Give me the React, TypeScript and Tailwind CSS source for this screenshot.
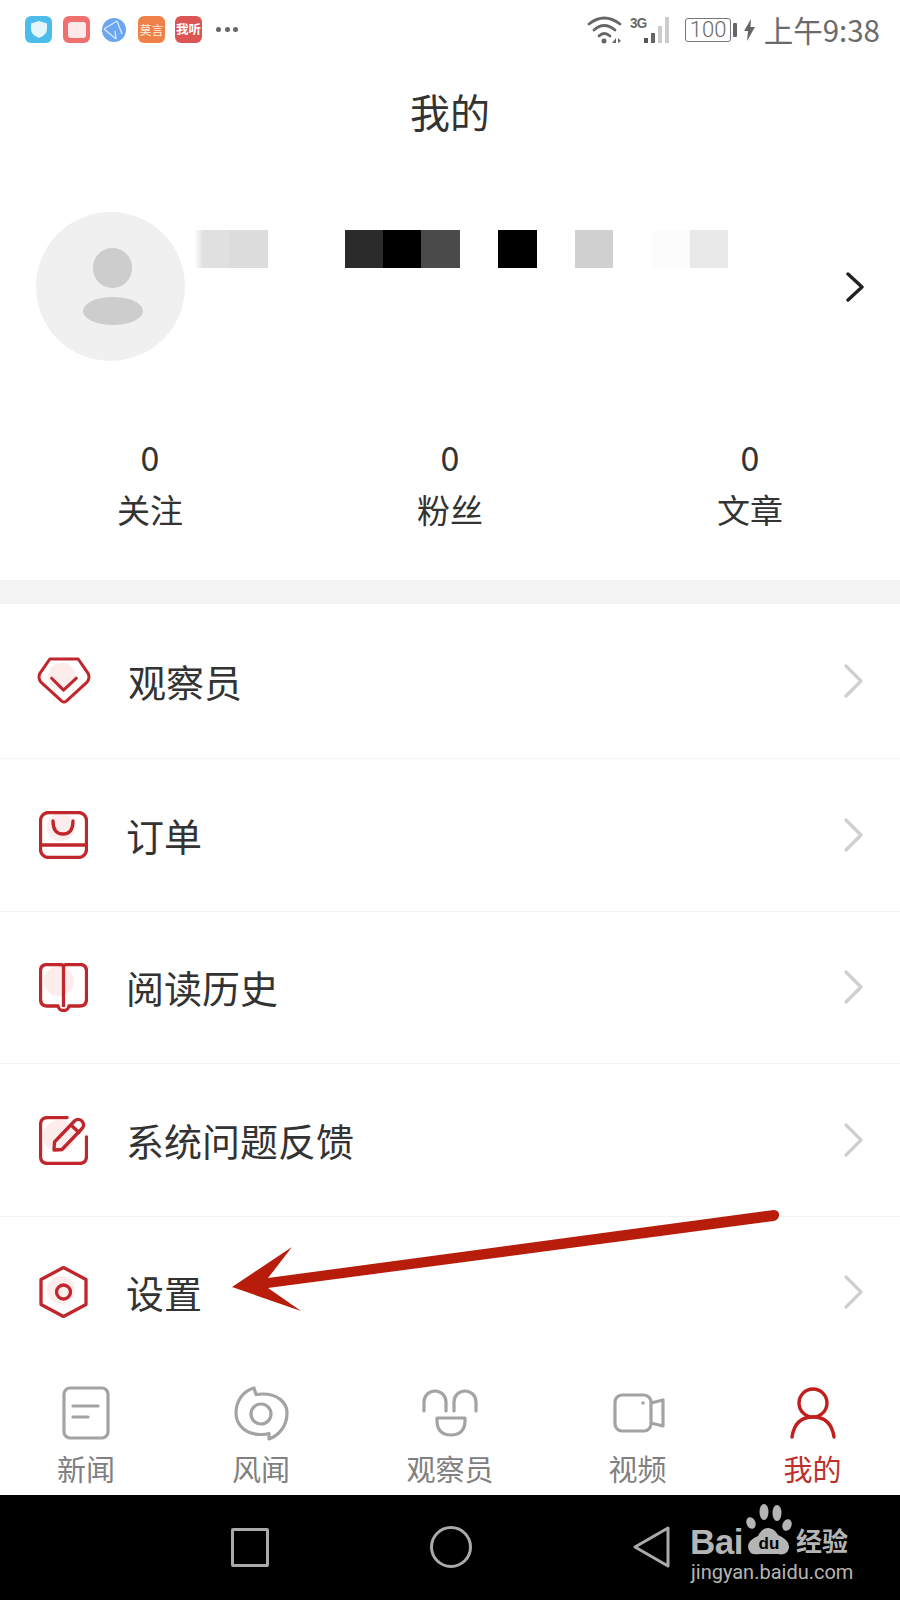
import React from "react";

const CJK = { fontFamily: '"Noto Sans CJK SC", "Noto Sans", sans-serif' };

function Chevron() {
  return (
    <svg width="20" height="34" viewBox="0 0 20 34" fill="none" stroke="#cfcfcf" strokeWidth="3.2" strokeLinecap="round" strokeLinejoin="round">
      <path d="M2 2 L17 17 L2 32" />
    </svg>
  );
}

const RED = "#c0262b";
const PINK = "#fcecec";

function Diamond() {
  return (
    <svg className="ml-[1px]" width="59" height="51" viewBox="-1 -1 59 51" fill="none" stroke={RED} strokeWidth="3.300" strokeLinejoin="round" strokeLinecap="round">
      <circle cx="26" cy="20" r="15" fill={PINK} stroke="none" />
      <path d="M13 1 L44 1 L55 17 Q57 22 54 26 L31 47 Q28.500 49 26 47 L3 26 Q0 22 2 17 Z" />
      <path d="M15 22 L28 35 L42 22" />
    </svg>
  );
}
function Bag() {
  return (
    <svg width="49" height="48" viewBox="0 0 49 48" fill="none" stroke={RED} strokeWidth="3.300" strokeLinecap="round">
      <circle cx="22" cy="16" r="14" fill={PINK} stroke="none" />
      <rect x="1.500" y="1.500" width="46" height="45" rx="8" />
      <path d="M1.500 34 H47.500" />
      <path d="M14 10 Q14 23 24 23 Q34 23 34 10" />
    </svg>
  );
}
function Book() {
  return (
    <svg width="49" height="49" viewBox="0 0 49 49" fill="none" stroke={RED} strokeWidth="3.300" strokeLinejoin="round">
      <circle cx="20" cy="18" r="15" fill={PINK} stroke="none" />
      <path d="M24.500 3 Q24.500 1.500 20 1.500 H8 Q1.500 1.500 1.500 8 V36 Q1.500 43 8 43 H19 Q20 47.500 24.500 47.500 Q29 47.500 30 43 H41 Q47.500 43 47.500 36 V8 Q47.500 1.500 41 1.500 H29 Q24.500 1.500 24.500 3 V44" />
    </svg>
  );
}
function Edit() {
  return (
    <svg width="49" height="49" viewBox="0 0 49 49" fill="none" stroke={RED} strokeWidth="3.300" strokeLinecap="round" strokeLinejoin="round">
      <circle cx="20" cy="20" r="16" fill={PINK} stroke="none" />
      <path d="M28 1.500 H9 Q1.500 1.500 1.500 9 V40 Q1.500 47.500 9 47.500 H40 Q47.500 47.500 47.500 40 V21" />
      <path d="M15 34 L15.500 26 L36 4.500 Q39 2 43 5 Q46 8.500 43.500 12 L23 33.500 Z" />
      <path d="M32 9 L40 16.500" />
    </svg>
  );
}
function Hex() {
  return (
    <svg width="49" height="52" viewBox="0 0 49 52" fill="none" stroke={RED} strokeWidth="3.300" strokeLinejoin="round">
      <circle cx="22" cy="24" r="14" fill={PINK} stroke="none" />
      <path d="M24.500 1.500 L47 13.500 V38.500 L24.500 50.500 L2 38.500 V13.500 Z" />
      <circle cx="24.500" cy="26" r="7" />
    </svg>
  );
}

function Row({ icon, label, border = true, h, tx = 0 }: { icon: React.ReactNode; label: string; border?: boolean; h: string; tx?: number }) {
  return (
    <div className={`flex items-center justify-between pl-[36px] pr-[36px] ${h} ${border ? "border-b border-[#f3f3f3]" : ""}`}>
      <div className="flex items-center">
        <div className="w-[55px] flex justify-center">{icon}</div>
        <span className="text-[38px] leading-none text-[#333]" style={{ marginLeft: 35 + tx }}>{label}</span>
      </div>
      <Chevron />
    </div>
  );
}

function Stat({ label }: { label: string }) {
  return (
    <div className="flex flex-col items-center w-[300px]">
      <span className="text-[34px] leading-[44px] text-[#333]">0</span>
      <span className="text-[33px] leading-[44px] mt-[8px] text-[#333]">{label}</span>
    </div>
  );
}

function NavItem({ icon, label, active, w }: { icon: React.ReactNode; label: string; active?: boolean; w: string }) {
  return (
    <div className={`flex flex-col items-center ${w}`}>
      <div className="h-[58px] flex items-center justify-center">{icon}</div>
      <span className={`text-[29px] leading-[36px] mt-[8px] ${active ? "text-[#c0302a]" : "text-[#808080]"}`}>{label}</span>
    </div>
  );
}

function AppSquare({ bg, children }: { bg: string; children: React.ReactNode }) {
  return <div className={`w-[27px] h-[27px] rounded-[6px] flex items-center justify-center overflow-hidden ${bg}`}>{children}</div>;
}

function StatusBar() {
  return (
    <div className="h-[60px] flex items-center justify-between pl-[25px] pr-[20px] pb-[1px]">
      <div className="flex items-center">
        <AppSquare bg="bg-[#4cbdea]">
          <svg width="18" height="19" viewBox="0 0 18 19"><path d="M9 1 L17 3.500 V9 Q17 15 9 18 Q1 15 1 9 V3.500 Z" fill="#e4f5fb" /></svg>
        </AppSquare>
        <div className="w-[11px]" />
        <AppSquare bg="bg-[#f07070]">
          <div className="w-[18px] h-[16px] bg-[#fde9e9] rounded-[3px]" />
        </AppSquare>
        <div className="w-[12px]" />
        <svg width="24" height="24" viewBox="0 0 24 24">
          <circle cx="12" cy="12" r="12" fill="#6ba6f0" />
          <path d="M2 11 L15 3 M2 11 L14 21 M15 3 L20 16 M14 21 L13 13" stroke="#dbe9fb" strokeWidth="1.300" fill="none" />
        </svg>
        <div className="w-[12px]" />
        <AppSquare bg="bg-[#ef8148]">
          <span className="text-[12px] leading-none text-[#fdeee0] whitespace-nowrap" style={{ fontFamily: '"Noto Sans CJK SC", sans-serif' }}>莫言</span>
        </AppSquare>
        <div className="w-[10px]" />
        <AppSquare bg="bg-[#dc5555]">
          <span className="text-[12.500px] leading-none font-bold text-white whitespace-nowrap">我听</span>
        </AppSquare>
        <div className="flex gap-[3.500px] ml-[14px]">
          <div className="w-[5px] h-[5px] rounded-full bg-[#666]" />
          <div className="w-[5px] h-[5px] rounded-full bg-[#666]" />
          <div className="w-[5px] h-[5px] rounded-full bg-[#666]" />
        </div>
      </div>
      <div className="flex items-center text-[#6a6a6a]">
        <svg width="36" height="30" viewBox="0 0 36 30" fill="none" stroke="#666" strokeWidth="2.800" strokeLinecap="round">
          <path d="M2 9 Q17 -3 33 9" />
          <path d="M7 15 Q17 6 28 15" />
          <path d="M12 21 Q17 16 23 21" />
          <circle cx="17" cy="26" r="2.500" fill="#666" stroke="none" />
          <path d="M25 28 L29 23 V28 Z M31 23 V28 L34 26 Z" fill="#666" stroke="none" />
        </svg>
        <div className="relative w-[45px] h-[30px] ml-[7px]">
          <span className="absolute left-[0px] top-[0px] text-[15px] leading-none font-bold tracking-[-0.800px] scale-x-90 origin-left" style={{ fontFamily: '"Liberation Sans", sans-serif' }}>3G</span>
          <svg className="absolute left-0 top-0" width="45" height="30" viewBox="0 0 45 30">
            <rect x="14" y="23" width="4" height="5" fill="#555" />
            <rect x="21" y="18" width="4" height="10" fill="#666" />
            <rect x="28" y="11" width="4" height="17" fill="#ccc" />
            <rect x="35" y="2" width="4" height="26" fill="#ccc" />
          </svg>
        </div>
        <div className="ml-[10px] w-[46px] h-[24px] rounded-[3px] border border-[#777] flex items-center justify-center text-[22px] leading-none" style={{ fontFamily: '"Roboto", sans-serif', fontWeight: 300 }}>100</div>
        <div className="ml-[2px] w-[3.500px] h-[14px] rounded-[1px] bg-[#666]" />
        <svg className="ml-[7px]" width="11" height="22" viewBox="0 0 11 22"><path d="M7 0 L0 12 H4 L3 22 L11 8 H6.500 Z" fill="#666" /></svg>
        <span className="ml-[9px] text-[29.500px] leading-none whitespace-nowrap">上午9:38</span>
      </div>
    </div>
  );
}

function Mosaic() {
  const cells = ["linear-gradient(90deg,#ffffff 8%,#e0e0e0 32%)", "#dcdcdc", "#ffffff", "#ffffff", "#2b2b2b", "#000000", "#4a4a4a", "#ffffff", "#000000", "#ffffff", "#d0d0d0", "#ffffff", "#fcfcfc", "#e8e8e8"];
  return (
    <div className="flex h-[38px]">
      {cells.map((c, i) => (
        <div key={i} className="w-[38.400px] h-full" style={{ background: c }} />
      ))}
    </div>
  );
}

function BaiduMark() {
  return (
    <div className="absolute left-[688px] top-[1502px] w-[170px] h-[80px] text-[#b5b5b5]">
      <span className="absolute left-[2px] top-[20px] text-[35px] leading-[40px] font-bold tracking-[-0.500px]" style={{ fontFamily: '"Liberation Sans", sans-serif' }}>Bai</span>
      <svg className="absolute left-[56px] top-0" width="50" height="56" viewBox="0 0 50 56" fill="#b5b5b5">
        <ellipse cx="7" cy="21" rx="4.500" ry="6" transform="rotate(-20 7 21)" />
        <ellipse cx="20" cy="10" rx="4.500" ry="8" />
        <ellipse cx="33" cy="11" rx="4.500" ry="8" />
        <ellipse cx="43" cy="23" rx="4.500" ry="6" transform="rotate(20 43 23)" />
        <path d="M24 26 Q30 26 34 33 Q46 38 45 46 Q43 54 34 52 H16 Q5 54 4 45 Q4 38 14 34 Q18 26 24 26 Z" />
        <text x="25" y="47" fontSize="17" fontWeight="700" textAnchor="middle" fill="#000" style={{ fontFamily: '"Liberation Sans", sans-serif' }}>du</text>
      </svg>
      <span className="absolute left-[108px] top-[21px] text-[26px] leading-[34px] font-bold whitespace-nowrap" style={CJK}>经验</span>
      <span className="absolute left-[3px] top-[57px] text-[20px] leading-[26px] whitespace-nowrap" style={{ fontFamily: '"Roboto", sans-serif' }}>jingyan.baidu.com</span>
    </div>
  );
}

export default function App() {
  return (
    <div className="relative w-[900px] h-[1600px] bg-white overflow-hidden flex flex-col" style={CJK}>
      <StatusBar />
      <div className="h-[106px] flex items-center justify-center pb-[4px] text-[40px] leading-none text-[#333]">我的</div>

      <div className="h-[269px] flex items-start pl-[36px] pr-[36px] pt-[46px]">
        <div className="w-[149px] h-[149px] rounded-full bg-[#f0f0f0] relative flex flex-col items-center shrink-0">
          <div className="w-[39px] h-[40px] rounded-full bg-[#cdcdcd] mt-[36px] ml-[4px]" />
          <div className="w-[60px] h-[28px] rounded-[50%] bg-[#cdcdcd] mt-[9px] ml-[4px]" />
        </div>
        <div className="ml-[6px] mt-[18px]">
          <Mosaic />
        </div>
        <div className="ml-auto mt-[60px] mr-[-1px]">
          <svg width="20" height="30" viewBox="0 0 20 30" fill="none" stroke="#222" strokeWidth="3.400" strokeLinecap="round" strokeLinejoin="round">
            <path d="M3 2 L17 15 L3 28" />
          </svg>
        </div>
      </div>

      <div className="h-[143px] flex">
        <Stat label="关注" />
        <Stat label="粉丝" />
        <Stat label="文章" />
      </div>

      <div className="h-[24px] bg-[#f3f3f3] mt-[2px]" />

      <Row icon={<Diamond />} label="观察员" tx={2} h="h-[154.800px]" />
      <Row icon={<Bag />} label="订单" h="h-[152.800px]" />
      <Row icon={<Book />} label="阅读历史" h="h-[152.800px]" />
      <Row icon={<Edit />} label="系统问题反馈" h="h-[152.800px]" />
      <Row icon={<Hex />} label="设置" border={false} h="h-[150px]" />

      <div className="flex-1 flex items-start pt-[17px]">
        <NavItem w="w-[172px]" label="新闻" icon={
          <svg width="48" height="54" viewBox="0 0 48 54" fill="none" stroke="#a3a3a3" strokeWidth="3.200" strokeLinecap="round">
            <rect x="2" y="2" width="44" height="50" rx="6" />
            <path d="M11 20 H36 M11 31 H26" />
          </svg>
        } />
        <NavItem w="w-[178px]" label="风闻" icon={
          <svg width="55" height="57" viewBox="8 4 55 57" fill="none" stroke="#a3a3a3" strokeWidth="3.200" strokeLinecap="round" strokeLinejoin="round">
            <path d="M28 7 C17 10 10 20 10 32 C10 44 20 54 36 53.500 Q40 53.500 43 52.500 L43 58 C54 54 61 44 61 32 C61 21 51 13 37 13 Q33 13 30 13.500 Z" />
            <circle cx="35" cy="33" r="10" />
          </svg>
        } />
        <NavItem w="w-[200px]" label="观察员" icon={
          <svg width="56" height="48" viewBox="0 0 56 48" fill="none" stroke="#a3a3a3" strokeWidth="3.200" strokeLinecap="round" strokeLinejoin="round">
            <path d="M2 22 V13 A11 11 0 0 1 24 13 V22" />
            <path d="M32 22 V13 A11 11 0 0 1 54 13 V22" />
            <path d="M15 29 H43 Q44 46 29 46 Q14 46 15 29 Z" />
          </svg>
        } />
        <NavItem w="w-[175px]" label="视频" icon={
          <svg className="ml-[3px]" width="52" height="40" viewBox="0 0 52 40" fill="none" stroke="#a3a3a3" strokeWidth="3.200" strokeLinejoin="round">
            <rect x="2" y="2" width="36" height="36" rx="7" />
            <path d="M38 10 L50 7 V33 L38 30" />
            <circle cx="30" cy="10" r="1.800" fill="#a3a3a3" stroke="none" />
          </svg>
        } />
        <NavItem w="w-[175px]" active label="我的" icon={
          <svg width="48" height="52" viewBox="0 0 48 52" fill="none" stroke="#c01f1c" strokeWidth="3.400" strokeLinecap="round">
            <circle cx="24" cy="16" r="14" />
            <path d="M3 50 Q6 30 24 30 Q42 30 45 50" />
          </svg>
        } />
      </div>

      <div className="h-[105px] bg-black flex items-start shrink-0">
        <div className="flex items-center pt-[31px] w-full pl-[231px]">
          <div className="w-[38px] h-[39px] border-[3px] border-[#aaaaaa] rounded-[2px]" />
          <div className="w-[42px] h-[42px] border-[3px] border-[#aaaaaa] rounded-full ml-[161px]" />
          <svg className="ml-[161px]" width="38" height="42" viewBox="0 0 38 42" fill="none" stroke="#aaaaaa" strokeWidth="3" strokeLinejoin="round">
            <path d="M35 2 V40 L2 21 Z" />
          </svg>
        </div>
      </div>

      <BaiduMark />

      <svg className="absolute left-0 top-0 pointer-events-none" width="900" height="1600" viewBox="0 0 900 1600">
        <path d="M232 1287 L292 1247 L268 1278 L774 1210 Q780 1211 779 1216 Q778 1220 774 1221 L268 1288 L301 1311 Z" fill="#b81c0b" />
      </svg>
    </div>
  );
}
